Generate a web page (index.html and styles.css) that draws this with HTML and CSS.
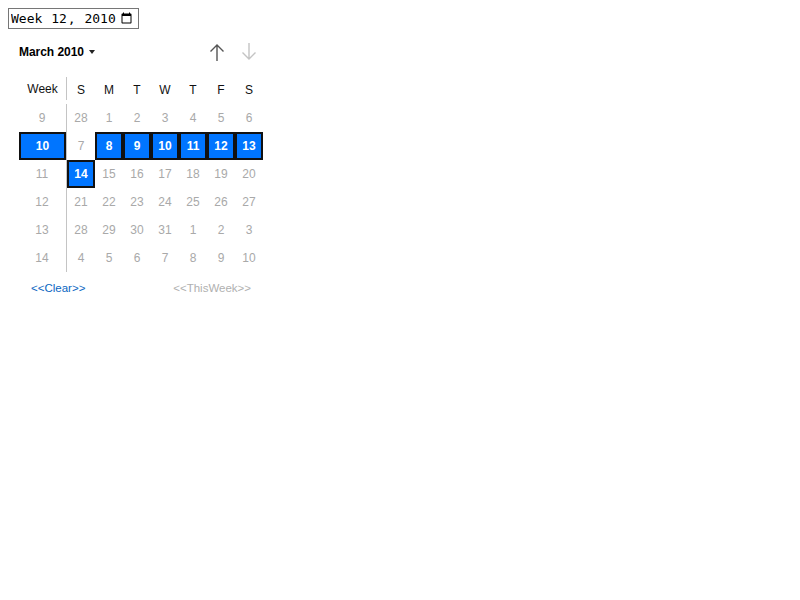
FILE: index.html
```html
<!DOCTYPE html>
<html>
<head>
<meta charset="utf-8">
<link rel="stylesheet" href="styles.css">
</head>
<body>
<input class="week-input" type="week" value="2010-W12">
<div class="picker">
  <div class="title-row">
    <div class="month">March 2010 <span class="caret"></span></div>
    <div class="navs">
      <span class="nav">
        <svg width="16" height="18" viewBox="0 0 16 18"><path d="M8 2V18M1.5 8.5L8 2L14.5 8.5" fill="none" stroke="#555" stroke-width="1.4"/></svg>
      </span>
      <span class="nav">
        <svg width="16" height="18" viewBox="0 0 16 18"><path d="M8 0V16M1.5 9.5L8 16L14.5 9.5" fill="none" stroke="#c4c4c4" stroke-width="1.4"/></svg>
      </span>
    </div>
  </div>
  <div class="grid">
    <div class="hd wk"><span>Week</span></div>
    <div class="hd">S</div><div class="hd">M</div><div class="hd">T</div><div class="hd">W</div><div class="hd">T</div><div class="hd">F</div><div class="hd">S</div>

    <div class="wk">9</div>
    <div class="d">28</div><div class="d">1</div><div class="d">2</div><div class="d">3</div><div class="d">4</div><div class="d">5</div><div class="d">6</div>

    <div class="wk"><span class="sel wide">10</span></div>
    <div class="d">7</div><div class="d"><span class="sel">8</span></div><div class="d"><span class="sel">9</span></div><div class="d"><span class="sel">10</span></div><div class="d"><span class="sel">11</span></div><div class="d"><span class="sel">12</span></div><div class="d"><span class="sel">13</span></div>

    <div class="wk">11</div>
    <div class="d"><span class="sel">14</span></div><div class="d">15</div><div class="d">16</div><div class="d">17</div><div class="d">18</div><div class="d">19</div><div class="d">20</div>

    <div class="wk">12</div>
    <div class="d">21</div><div class="d">22</div><div class="d">23</div><div class="d">24</div><div class="d">25</div><div class="d">26</div><div class="d">27</div>

    <div class="wk">13</div>
    <div class="d">28</div><div class="d">29</div><div class="d">30</div><div class="d">31</div><div class="d">1</div><div class="d">2</div><div class="d">3</div>

    <div class="wk">14</div>
    <div class="d">4</div><div class="d">5</div><div class="d">6</div><div class="d">7</div><div class="d">8</div><div class="d">9</div><div class="d">10</div>
  </div>
  <div class="footer">
    <span class="clear">&lt;&lt;Clear&gt;&gt;</span>
    <span class="thisweek">&lt;&lt;ThisWeek&gt;&gt;</span>
  </div>
</div>
</body>
</html>
```
FILE: styles.css
```css
body {
  margin: 8px;
  font-family: "Liberation Sans", Arial, sans-serif;
  background: #fff;
}
.week-input {
  display: block;
  margin: 0;
  box-sizing: border-box;
  width: 131px;
  height: 21px;
  padding: 1px 3px 1px 2px;
  border: 1px solid #767676;
  font-family: "DejaVu Sans Mono", monospace;
  font-size: 13px;
  color: #000;
  background: #fff;
}
.picker {
  margin-left: 11px;
  width: 244px;
}
.title-row {
  margin-top: 12px;
  height: 22px;
  display: flex;
  align-items: center;
  justify-content: space-between;
}
.month {
  font-size: 12px;
  font-weight: bold;
  color: #000;
  display: flex;
  align-items: center;
  letter-spacing: -0.05px;
}
.caret {
  display: inline-block;
  margin-left: 5px;
  width: 0;
  height: 0;
  border-left: 3.5px solid transparent;
  border-right: 3.5px solid transparent;
  border-top: 4px solid #222;
}
.navs {
  display: flex;
  gap: 16px;
  margin-right: 6px;
}
.nav {
  display: flex;
  width: 16px;
  height: 18px;
}
.grid {
  margin-top: 12px;
  display: grid;
  grid-template-columns: 48px repeat(7, 28px);
  grid-template-rows: 29px;
  grid-auto-rows: 28px;
  font-size: 12px;
  color: #a9a9a9;
}
.grid > div {
  display: flex;
  align-items: center;
  justify-content: center;
}
.hd {
  color: #111;
}
.wk {
  border-right: 1px solid #c4c4c4;
}
.hd.wk {
  border-right: none;
}
.hd.wk span {
  display: flex;
  align-items: center;
  justify-content: center;
  width: 47px;
  height: 23px;
  margin-top: -2px;
  border-right: 1px solid #c4c4c4;
}
.grid > .wk:not(.hd) {
  justify-content: center;
  padding-right: 1px;
}
.sel {
  box-sizing: border-box;
  width: 28px;
  height: 28px;
  background: #0075ff;
  border: 2px solid #111;
  color: #fff;
  font-weight: bold;
  display: flex;
  align-items: center;
  justify-content: center;
}
.sel.wide {
  width: 47px;
}
.wk .sel.wide {
  margin-right: -1px;
}
.footer {
  margin-top: 10px;
  display: flex;
  justify-content: space-between;
  padding: 0 12px 0 12px;
  font-size: 11.5px;
}
.clear {
  color: #0a66c2;
}
.thisweek {
  color: #b0b0b0;
}
```
